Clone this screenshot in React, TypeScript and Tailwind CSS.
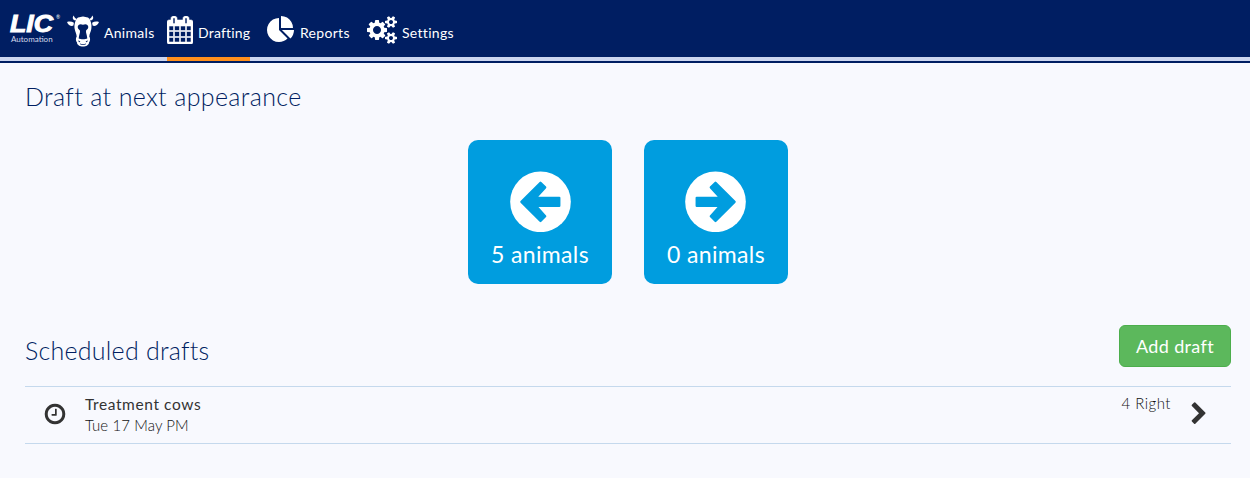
import React from 'react';

const CAL = 'M192 1664h288v-288h-288v288zm352 0h320v-288h-320v288zm-352-352h288v-320h-288v320zm352 0h320v-320h-320v320zm-352-384h288v-288h-288v288zm736 736h320v-288h-320v288zm-384-736h320v-288h-320v288zm768 736h288v-288h-288v288zm-384-352h320v-320h-320v320zm-352-864v-288q0-13-9.5-22.5t-22.5-9.5h-64q-13 0-22.5 9.5t-9.5 22.5v288q0 13 9.5 22.5t22.5 9.5h64q13 0 22.5-9.5t9.5-22.5zm736 864h288v-320h-288v320zm-384-384h320v-288h-320v288zm384 0h288v-288h-288v288zm32-480v-288q0-13-9.5-22.5t-22.5-9.5h-64q-13 0-22.5 9.5t-9.5 22.5v288q0 13 9.5 22.5t22.5 9.5h64q13 0 22.5-9.5t9.5-22.5zm384-64v1280q0 52-38 90t-90 38h-1408q-52 0-90-38t-38-90v-1280q0-52 38-90t90-38h128v-96q0-66 47-113t113-47h64q66 0 113 47t47 113v96h384v-96q0-66 47-113t113-47h64q66 0 113 47t47 113v96h128q52 0 90 38t38 90z';
const PIE = 'M768 890l546 546q-106 108-247.5 168t-298.5 60q-209 0-385.5-103t-279.5-279.5-103-385.5 103-385.5 279.5-279.5 385.5-103v762zm187 6h773q0 157-60 298.5t-168 247.5zm709-128h-768v-768q209 0 385.5 103t279.5 279.5 103 385.5z';
const COGS = 'M832 896q0-106-75-181t-181-75-181 75-75 181 75 181 181 75 181-75 75-181zm768 512q0-52-38-90t-90-38-90 38-38 90q0 53 37.5 90.5t90.5 37.5 90.5-37.5 37.5-90.5zm0-1024q0-52-38-90t-90-38-90 38-38 90q0 53 37.5 90.5t90.5 37.5 90.5-37.5 37.5-90.5zm-384 421v185q0 10-7 19.5t-16 10.5l-155 24q-11 35-32 76 34 48 90 115 7 11 7 20 0 12-7 19-23 30-82.5 89.5t-78.5 59.5q-11 0-21-7l-115-90q-37 19-77 31-11 108-23 155-7 24-30 24h-186q-11 0-20-7.5t-10-17.5l-23-153q-34-10-75-31l-118 89q-7 7-20 7-11 0-21-8-144-133-144-160 0-9 7-19 10-14 41-53t47-61q-23-44-35-82l-152-24q-10-1-17-9.5t-7-19.5v-185q0-10 7-19.5t16-10.5l155-24q11-35 32-76-34-48-90-115-7-11-7-20 0-12 7-20 22-30 82-89t79-59q11 0 21 7l115 90q34-18 77-32 11-108 23-154 7-24 30-24h186q11 0 20 7.5t10 17.5l23 153q34 10 75 31l118-89q8-7 20-7 11 0 21 8 144 133 144 160 0 8-7 19-12 16-42 54t-45 60q23 48 34 82l152 23q10 2 17 10.5t7 19.5zm640 533v140q0 16-149 31-12 27-30 52 51 113 51 138 0 4-4 7-122 71-124 71-8 0-46-47t-52-68q-20 2-30 2t-30-2q-14 21-52 68t-46 47q-2 0-124-71-4-3-4-7 0-25 51-138-18-25-30-52-149-15-149-31v-140q0-16 149-31 13-29 30-52-51-113-51-138 0-4 4-7 4-2 35-20t59-34 30-16q8 0 46 46.5t52 67.5q20-2 30-2t30 2q51-71 92-112l6-2q4 0 124 70 4 3 4 7 0 25-51 138 17 23 30 52 149 15 149 31zm0-1024v140q0 16-149 31-12 27-30 52 51 113 51 138 0 4-4 7-122 71-124 71-8 0-46-47t-52-68q-20 2-30 2t-30-2q-14 21-52 68t-46 47q-2 0-124-71-4-3-4-7 0-25 51-138-18-25-30-52-149-15-149-31v-140q0-16 149-31 13-29 30-52-51-113-51-138 0-4 4-7 4-2 35-20t59-34 30-16q8 0 46 46.5t52 67.5q20-2 30-2t30 2q51-71 92-112l6-2q4 0 124 70 4 3 4 7 0 25-51 138 17 23 30 52 149 15 149 31z';
const CHEVRON = 'M1363 877l-742 742q-19 19-45 19t-45-19l-166-166q-19-19-19-45t19-45l531-531-531-531q-19-19-19-45t19-45l166-166q19-19 45-19t45 19l742 742q19 19 19 45t-19 45z';
const CLOCK = 'M1024 544v448q0 14-9 23t-23 9h-320q-14 0-23-9t-9-23v-64q0-14 9-23t23-9h224v-352q0-14 9-23t23-9h64q14 0 23 9t9 23zm416 352q0-148-73-273t-198-198-273-73-273 73-198 198-73 273 73 273 198 198 273 73 273-73 198-198 73-273zm224 0q0 209-103 385.5t-279.5 279.5-385.5 103-385.5-103-279.5-279.5-103-385.5 103-385.5 279.5-279.5 385.5-103 385.5 103 279.5 279.5 103 385.5z';

function Logo() {
  return (
    <div className="h-[46px] w-[67px] pt-[14px] pl-[10px] text-white">
      <div className="flex h-[21px] items-start">
        <span className="block h-[20px] w-[38px] origin-left scale-x-[1.16] font-['Liberation_Sans'] text-[23px] leading-[20px] font-bold italic [-webkit-text-stroke:0.9px_white]">LIC</span>
        <span className="ml-[8px] text-[5px] leading-[6px]">®</span>
      </div>
      <div className="pl-[1px] text-[8px] leading-[9px] text-[#d5dbec]">Automation</div>
    </div>
  );
}

function Cow() {
  return (
    <svg viewBox="0 0 32 32" className="mt-[15px] h-[32px] w-[32px]" fill="white">
      <path d="M6.800.5C5 2.500 5.600 4.800 8.400 5.600L9.900 4C8.300 3.500 7.200 2.300 6.800.5ZM25.200.5C27 2.500 26.400 4.800 23.600 5.600L22.100 4C23.700 3.500 24.800 2.300 25.200.5Z" />
      <path d="M0 6.900C2.500 6.200 4.800 6.300 6.900 7.700L6.400 10.600C4 11.600 1.200 10 0 6.900ZM32 6.900C29.500 6.200 27.200 6.300 25.100 7.700L25.600 10.600C28 11.600 30.800 10 32 6.900Z" />
      <path fillRule="evenodd" d="M11 2.500C13 2.500 14 1.500 16 1.500S19 2.500 21 2.500C24 5 25 10 24.300 14C23.800 17 22.500 18.500 22.300 21.500C23.600 23.500 23.200 26 22 27.500C22 30 19 31.500 16 31.500S10 30 10 27.500C8.800 26 8.400 23.500 9.700 21.500C9.500 18.500 8.200 17 7.700 14C7 10 8 5 11 2.500ZM16 9.800C13.500 8.400 10.800 9.300 10.700 12C10.900 14.300 12.600 14.700 13 15.700C13.200 18 12 19.500 11.700 23.500C13.500 24.500 18.500 24.500 20.300 23.500C20 19.500 18.800 18 19 15.700C19.400 14.700 21.100 14.300 21.300 12C21.200 9.300 18.500 8.400 16 9.800ZM11.500 25.300v1.200q.9 1.200 1.900.2ZM20.500 25.300v1.200q-.9 1.200-1.900.2ZM13 28.500q3 1.400 6 0v.8q-3 1.300-6 0Z" />
    </svg>
  );
}

function Tile({ dir, label }: { dir: 'left' | 'right'; label: string }) {
  return (
    <button className="flex h-[144px] w-[144px] flex-col items-center rounded-[10px] bg-[#009ddf] pt-[31px] text-white">
      <svg viewBox="150 125 182 182" className={dir === 'left' ? 'h-[61px] w-[61px]' : 'mr-[1px] h-[61px] w-[61px] -scale-x-100'}>
        <circle cx="241" cy="217" r="90.500" fill="white" />
        <path d="M184 217L241 160L255 174L227 205H297V229H227L255 260L241 274Z" fill="#009ddf" stroke="#009ddf" strokeWidth="7" strokeLinejoin="round" />
      </svg>
      <span className="mt-[6px] text-[23px] leading-[32px] tracking-[0.35px] whitespace-nowrap">{label}</span>
    </button>
  );
}

export default function App() {
  return (
    <div className="h-[478px] w-[1250px] overflow-hidden bg-[#f8f9fe] font-[Lato,sans-serif]">
      <header className="flex h-[63px] flex-col bg-[#001e62]">
        <nav className="flex h-[57px] text-[14px] leading-[20px] text-white">
          <Logo />
          <div className="flex w-[100px]">
            <Cow />
            <span className="mt-[23px] ml-[5px] tracking-[0.3px]">Animals</span>
          </div>
          <div className="flex w-[100px]">
            <svg viewBox="64 0 1664 1792" className="mt-[16px] h-[28px] w-[26px]" fill="white" stroke="white" strokeWidth="36"><path d={CAL} /></svg>
            <span className="mt-[23px] ml-[5px] tracking-[0.2px]">Drafting</span>
          </div>
          <div className="flex w-[100px]">
            <svg viewBox="0 0 1792 1792" className="mt-[16px] h-[28px] w-[28px]" fill="white"><path d={PIE} /></svg>
            <span className="mt-[23px] ml-[5px] tracking-[0.3px]">Reports</span>
          </div>
          <div className="flex">
            <svg viewBox="-64 0 1920 1792" className="mt-[16px] h-[28px] w-[30px]" fill="white"><path d={COGS} /></svg>
            <span className="mt-[23px] ml-[5px] tracking-[0.3px]">Settings</span>
          </div>
        </nav>
        <div className="h-[4px] bg-[#ccd6f0] pl-[167px]"><div className="h-[4px] w-[83px] bg-[#ff8f1c]" /></div>
      </header>
      <main className="pr-[19px] pl-[25px] text-[#333]">
        <h1 className="h-[77px] pt-[17px] text-[25px] leading-[32px] font-light tracking-[0.36px] text-[#001e62]">Draft at next appearance</h1>
        <div className="flex justify-center gap-[32px]">
          <Tile dir="left" label="5 animals" />
          <Tile dir="right" label="0 animals" />
        </div>
        <div className="mt-[41px] flex h-[61px] justify-between">
          <h2 className="pt-[9px] text-[25px] leading-[32px] font-light tracking-[0.25px] text-[#001e62]">Scheduled drafts</h2>
          <button className="h-[42px] w-[112px] rounded-[6px] border border-[#4cae4c] bg-[#5cb85c] text-[18px] tracking-[0.35px] text-white">Add draft</button>
        </div>
        <div className="flex h-[58px] border-y border-[#c5d9ed] text-[15px] leading-[21px]">
          <svg viewBox="0 0 1792 1792" className="mt-[15px] ml-[18px] h-[24px] w-[24px]" fill="#333"><path d={CLOCK} /></svg>
          <div className="ml-[18px] pt-[7px]">
            <div className="text-[15.5px] tracking-[0.6px]">Treatment cows</div>
            <div className="font-light tracking-[0.1px] text-[#111]">Tue 17 May PM</div>
          </div>
          <span className="mt-[6px] ml-auto font-light tracking-[0.5px] text-[#111]">4 Right</span>
          <svg viewBox="0 0 1792 1792" className="mt-[15px] mr-[20px] ml-[16px] h-[24px] w-[24px]" fill="#333"><path d={CHEVRON} /></svg>
        </div>
      </main>
    </div>
  );
}
